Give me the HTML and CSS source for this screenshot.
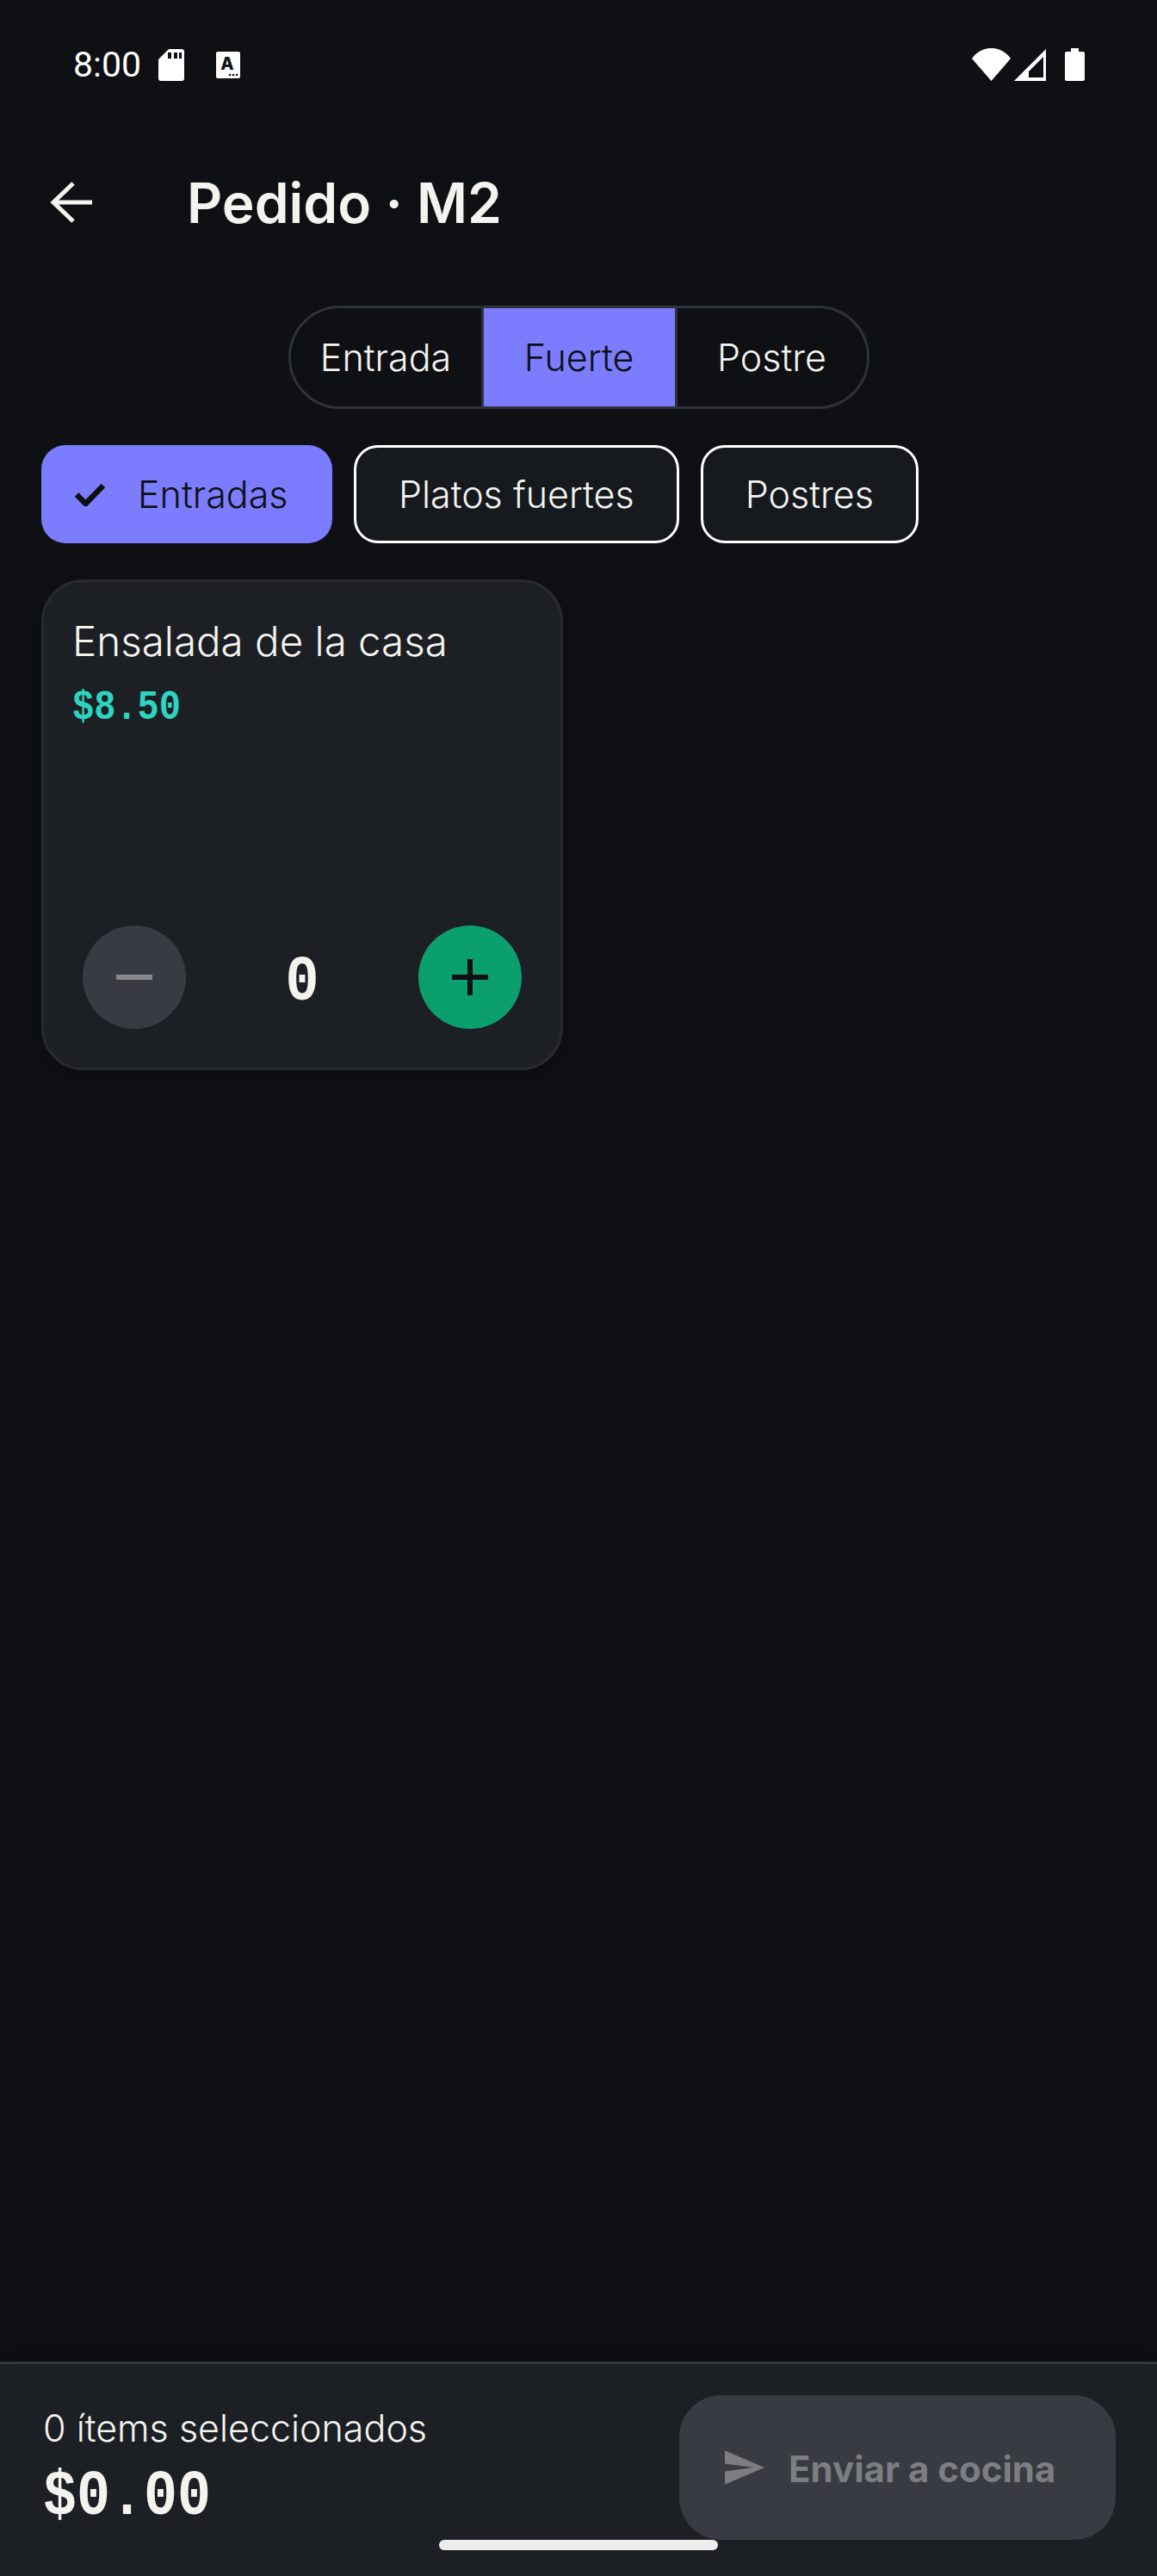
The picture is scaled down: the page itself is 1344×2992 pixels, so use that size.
FILE: index.html
```html
<!DOCTYPE html>
<html lang="es">

<head>
    <meta charset="UTF-8">
    <meta name="viewport" content="width=device-width, initial-scale=1.0">
    <title>Pedido M2</title>
    <link rel="stylesheet" href="styles.css">
</head>

<body>

    <div class="screen">
        <!-- Status bar -->
        <div class="status-bar">
            <div class="status-left">
                <span class="clock">8:00</span>
                <svg class="icon-sd" width="30" height="37" viewBox="0 0 30 37">
                    <path fill="#fff" d="M12 0H27a3 3 0 0 1 3 3V34a3 3 0 0 1-3 3H3a3 3 0 0 1-3-3V12z" />
                    <path fill="#0e1014" d="M11 4h4v7h-4zM18 4h4v7h-4zM24 4h3v7h-3z" />
                </svg>
                <svg class="icon-a" width="28" height="31" viewBox="0 0 28 31">
                    <rect width="28" height="31" rx="2" fill="#fff" />
                    <text x="13" y="21" text-anchor="middle" class="icon-a-letter">A</text>
                    <circle cx="16" cy="27" r="1.3" fill="#0e1014" />
                    <circle cx="20" cy="27" r="1.3" fill="#0e1014" />
                    <circle cx="24" cy="27" r="1.3" fill="#0e1014" />
                </svg>
            </div>
            <div class="status-right">
                <svg width="45" height="38" viewBox="0 0 45 38">
                    <path fill="#fff" d="M0 12A27 27 0 0 1 45 12L22.5 38z" />
                </svg>
                <svg width="37" height="37" viewBox="0 0 37 37">
                    <path fill="#fff" fill-rule="evenodd" d="M0 37L37 0V37zM17 33H34V9L17 26z" />
                </svg>
                <svg class="icon-battery" width="23" height="38" viewBox="0 0 23 38">
                    <path fill="#fff" d="M7 0h9v4h5a2 2 0 0 1 2 2V36a2 2 0 0 1-2 2H2a2 2 0 0 1-2-2V6a2 2 0 0 1 2-2h5z" />
                </svg>
            </div>
        </div>

        <!-- App bar -->
        <div class="app-bar">
            <svg class="back" width="50" height="48" viewBox="0 0 50 48">
                <path d="M49 24H5M27 2L4 24l23 22" fill="none" stroke="#f4f3ee" stroke-width="5" />
            </svg>
            <h1>Pedido · M2</h1>
        </div>

        <!-- Course selector -->
        <div class="segments">
            <div class="segment">Entrada</div>
            <div class="segment active">Fuerte</div>
            <div class="segment last">Postre</div>
        </div>

        <!-- Category chips -->
        <div class="chips">
            <div class="chip selected">
                <svg width="35" height="27" viewBox="0 0 35 27">
                    <path d="M2 13.5L12.5 24 33 3" fill="none" stroke="#0e1014" stroke-width="6.5" />
                </svg>
                Entradas
            </div>
            <div class="chip">Platos fuertes</div>
            <div class="chip">Postres</div>
        </div>

        <!-- Products -->
        <div class="card">
            <div class="card-name">Ensalada de la casa</div>
            <div class="card-price"><span class="tall">$8.50</span></div>
            <div class="stepper">
                <div class="step minus"><span class="bar"></span></div>
                <div class="count"><span class="tall">0</span></div>
                <div class="step plus"><span class="bar"></span><span class="bar vertical"></span></div>
            </div>
        </div>

        <!-- Bottom summary -->
        <div class="summary">
            <div class="summary-text">
                <div class="summary-count">0 ítems seleccionados</div>
                <div class="summary-total"><span class="tall">$0.00</span></div>
            </div>
            <div class="send">
                <svg width="46" height="40" viewBox="2 3 21 18">
                    <path d="M2.01 21L23 12 2.01 3 2 10l15 2-15 2z" />
                </svg>
                <span class="send-label">Enviar a cocina</span>
            </div>
        </div>

        <div class="home-indicator"></div>
    </div>

</body>

</html>
```

FILE: styles.css
```css
* {
    box-sizing: border-box;
}

body {
    margin: 0;
    padding: 0;
    background-color: #0e1014;
    font-family: Inter, "Noto Sans", sans-serif;
    color: #f4f3ee;
}

.screen {
    position: relative;
    display: flex;
    flex-direction: column;
    width: 1344px;
    height: 2992px;
    overflow: hidden;
}

.status-bar {
    display: flex;
    justify-content: space-between;
    align-items: center;
    height: 150px;
    padding: 0 84px 0 85px;
    color: #fff;
}

.status-left,
.status-right {
    display: flex;
    align-items: center;
}

.clock {
    font-family: Roboto, sans-serif;
    font-size: 41px;
    margin-right: 20px;
}

.icon-a {
    margin-left: 37px;
}

.icon-a-letter {
    font-family: Inter, sans-serif;
    font-size: 20px;
    font-weight: 800;
    fill: #0e1014;
}

.status-right {
    gap: 4px;
}

.icon-battery {
    margin-left: 18px;
}

.app-bar {
    display: flex;
    align-items: center;
    height: 170px;
    padding-left: 58px;
}

.app-bar h1 {
    margin: 0 0 0 109px;
    font-size: 64px;
    font-weight: 600;
}

.segments {
    display: flex;
    align-self: center;
    height: 120px;
    margin-top: 35px;
    border: 3px solid #2e333b;
    border-radius: 60px;
    overflow: hidden;
}

.segment {
    display: flex;
    align-items: center;
    justify-content: center;
    width: 221px;
    font-size: 43px;
    font-weight: 300;
}

.segment.last {
    width: 220px;
}

.segment.active {
    width: 228px;
    border-left: 3px solid #2e333b;
    border-right: 3px solid #2e333b;
    background-color: #7c7cff;
    color: #0e1014;
}

.chips {
    display: flex;
    gap: 25px;
    height: 114px;
    margin-top: 42px;
    padding-left: 48px;
}

.chip {
    display: flex;
    align-items: center;
    padding: 0 49px;
    background-color: #161a1f;
    border: 3.5px solid #fff;
    border-radius: 28px;
    font-size: 43px;
    font-weight: 300;
}

.chip.selected {
    gap: 38px;
    width: 338px;
    padding: 0 0 0 39px;
    background-color: #7c7cff;
    border: none;
    color: #0e1014;
}

.card {
    display: flex;
    flex-direction: column;
    width: 606px;
    height: 570px;
    margin: 42px 0 0 48px;
    padding: 40px 33px 0;
    background-color: #1c1f24;
    border: 3px solid #272b31;
    border-radius: 49px;
    box-shadow: 0 8px 24px rgba(0, 0, 0, 0.25);
}

.card-name {
    font-size: 47.5px;
    font-weight: 300;
}

.card-price {
    margin-top: 25px;
    font-family: "Liberation Mono", monospace;
    font-size: 42px;
    font-weight: 700;
    color: #2dd4bf;
}

/* the mono digits in the app are taller than Liberation Mono */
.tall {
    display: inline-block;
    transform: scaleY(1.14);
}

.stepper {
    display: flex;
    align-items: center;
    justify-content: space-between;
    margin: auto 12px 45px;
}

.step {
    position: relative;
    width: 120px;
    height: 120px;
    border-radius: 50%;
}

.step.minus {
    background-color: #383b41;
}

.step.plus {
    background-color: #0c9f6e;
}

.bar {
    position: absolute;
    left: 39px;
    top: 57px;
    width: 42px;
    height: 6px;
    background-color: #0e1014;
}

.minus .bar {
    background-color: #88898c;
}

.bar.vertical {
    left: 57px;
    top: 39px;
    width: 6px;
    height: 42px;
}

.count {
    margin-top: 14px;
    font-family: "Liberation Mono", monospace;
    font-size: 65px;
    font-weight: 700;
}

.summary {
    display: flex;
    justify-content: space-between;
    height: 249px;
    margin-top: auto;
    padding: 36px 48px 0 50px;
    background-color: #1c1f24;
    border-top: 3px solid #33363d;
    box-shadow: 0 -8px 24px rgba(0, 0, 0, 0.3);
}

.summary-count {
    margin-top: 12px;
    font-size: 43px;
    font-weight: 300;
}

.summary-total {
    margin-top: 18px;
    font-family: "Liberation Mono", monospace;
    font-size: 65px;
    font-weight: 700;
}

.send {
    display: flex;
    align-items: center;
    gap: 28px;
    width: 507px;
    height: 168px;
    padding-left: 53px;
    background-color: #383b41;
    border-radius: 49px;
    color: #7c7e81;
    font-size: 42px;
    font-weight: 700;
}

.send svg {
    fill: #7c7e81;
}

.send-label {
    padding-top: 3px;
}

.home-indicator {
    position: absolute;
    left: 510px;
    top: 2950px;
    width: 324px;
    height: 12px;
    border-radius: 6px;
    background-color: #eceeed;
}
```
